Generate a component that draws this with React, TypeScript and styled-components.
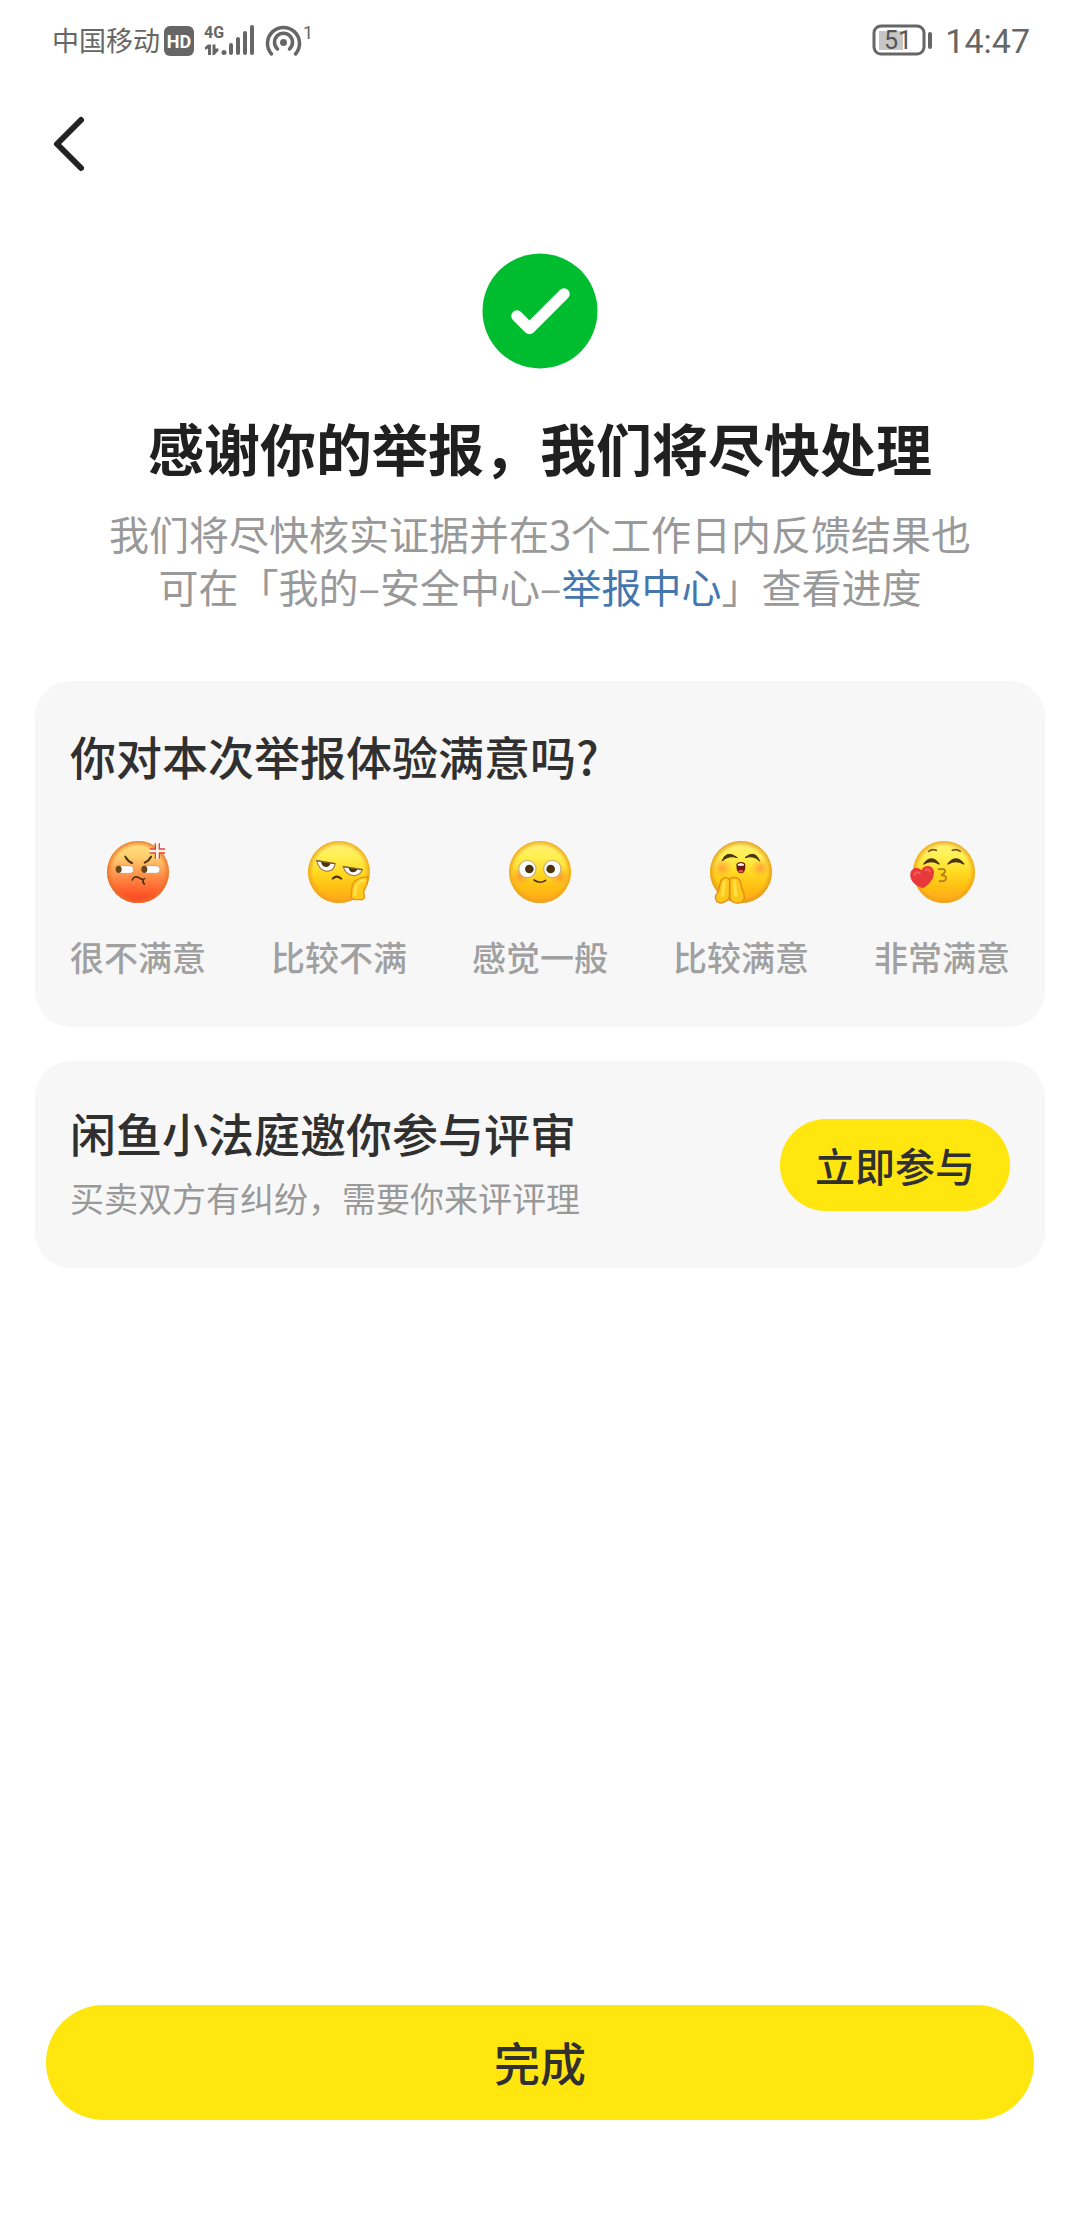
import React from "react";
import styled, { createGlobalStyle } from "styled-components";

const INK = "#303030";
const GREY = "#999999";
const YELLOW = "#ffe60f";
const STATUS = "#666666";

const GlobalStyle = createGlobalStyle`
  * { box-sizing: border-box; }
  body {
    margin: 0;
    background: #ffffff;
    font-family: "Noto Sans CJK SC", "Noto Sans", sans-serif;
  }
  button { font-family: inherit; border: 0; padding: 0; cursor: pointer; }
  svg { display: block; flex: none; overflow: visible; }
  h1, h2, p { margin: 0; }
`;

const Screen = styled.div`
  min-height: 100vh;
  display: flex;
  flex-direction: column;
`;

const StatusBar = styled.header`
  height: 80px;
  padding: 0 50px 0 52px;
  display: flex;
  align-items: center;
  justify-content: space-between;
  color: ${STATUS};
`;

const StatusGroup = styled.div<{ $gap: number }>`
  display: flex;
  align-items: center;
  gap: ${(p) => p.$gap}px;
`;

const Carrier = styled.span`
  font-size: 27px;
  line-height: 40px;
  font-weight: 400;
`;

const Clock = styled.time`
  padding-top: 2px;
  font: 400 34px/40px Roboto, sans-serif;
`;

const Nav = styled.nav`
  height: 128px;
  padding: 0 33px;
  display: flex;
  align-items: center;
`;

const BackButton = styled.button`
  width: 72px;
  height: 72px;
  display: grid;
  place-items: center;
  background: none;
`;

const Content = styled.main`
  flex: 1;
  padding: 45px 35px 0;
  display: flex;
  flex-direction: column;
`;

const Result = styled.section`
  display: flex;
  flex-direction: column;
  align-items: center;
  text-align: center;
`;

const ResultTitle = styled.h1`
  margin-top: 44px;
  font-size: 56px;
  line-height: 68px;
  font-weight: 700;
  color: #202020;
`;

const ResultText = styled.p`
  margin-top: 26px;
  font-size: 40px;
  line-height: 53px;
  color: ${GREY};
`;

const InlineLink = styled.a`
  color: #4577ad;
  text-decoration: none;
`;

const Cards = styled.div`
  margin-top: 68px;
  display: flex;
  flex-direction: column;
  gap: 34px;
`;

const Card = styled.section`
  padding: 44px 35px 48px;
  border-radius: 36px;
  background: #f7f7f7;
`;

const InviteCard = styled(Card)`
  padding: 41px 35px;
  display: flex;
  align-items: center;
  justify-content: space-between;
`;

const InviteBody = styled.div`
  padding-bottom: 5px;
`;

const CardTitle = styled.h2`
  font-size: 46px;
  line-height: 60px;
  font-weight: 500;
  color: ${INK};
`;

const CardText = styled.p`
  margin-top: 12px;
  font-size: 34px;
  line-height: 48px;
  color: ${GREY};
`;

const Ratings = styled.div`
  margin-top: 51px;
  display: flex;
  justify-content: space-between;
`;

const Rating = styled.button`
  display: flex;
  flex-direction: column;
  align-items: center;
  gap: 27px;
  background: none;
  font-size: 34px;
  font-weight: 500;
  line-height: 44px;
  color: #a0a0a0;
`;

const JoinButton = styled.button`
  height: 92px;
  padding: 0 35px;
  border-radius: 46px;
  background: ${YELLOW};
  font-size: 40px;
  font-weight: 500;
  color: ${INK};
`;

const Footer = styled.footer`
  padding: 0 46px 120px;
`;

const DoneButton = styled.button`
  width: 100%;
  height: 115px;
  padding-bottom: 4px;
  border-radius: 58px;
  background: ${YELLOW};
  font-size: 46px;
  font-weight: 500;
  color: ${INK};
`;

const SignalIcons = () => (
  <svg width="154" height="40" viewBox="164 20 154 40" fill={STATUS} aria-hidden="true">
    <rect x="164" y="26" width="30" height="30" rx="6" />
    <text x="179" y="48" fontSize="18" fontWeight="700" fontFamily="Roboto, sans-serif" fill="#fff" textAnchor="middle">HD</text>
    <text x="204" y="38" fontSize="16" fontWeight="700" fontFamily="'Liberation Sans Narrow', Roboto, sans-serif">4G</text>
    <path d="M205 50 V47 L208 44.500 H211 V55 H208 V48.500 Z" />
    <path d="M212.500 44.500 H215.500 V48.500 L218.500 48.500 V50.500 L214.500 55 H212.500 Z" />
    <circle cx="224" cy="52.500" r="2.500" />
    <rect x="229" y="43" width="4" height="12" rx="2" />
    <rect x="236" y="37" width="4" height="18" rx="2" />
    <rect x="243" y="31" width="4" height="24" rx="2" />
    <rect x="250" y="25" width="4" height="30" rx="2" />
    <g fill="none" stroke={STATUS} strokeWidth="3.500" strokeLinecap="round">
      <path d="M271.500 54 A16 16 0 1 1 295.500 54" />
      <path d="M277.500 49 A9 9 0 1 1 289.500 49" />
    </g>
    <circle cx="283.500" cy="42.500" r="3.500" />
    <text x="303" y="39" fontSize="18" fontFamily="Roboto, sans-serif">1</text>
  </svg>
);

const Battery = () => (
  <svg width="60" height="32" viewBox="873 24 60 32" role="img" aria-label="51%">
    <rect x="880" y="31" width="24" height="19" fill="#c6c6c6" />
    <rect x="875" y="26" width="50" height="28" rx="7" fill="none" stroke={STATUS} strokeWidth="3" />
    <rect x="929" y="32" width="4" height="17" rx="2" fill={STATUS} />
    <text x="899" y="49" fontSize="25" fontFamily="Roboto, sans-serif" fill="#555" textAnchor="middle">51</text>
  </svg>
);

const BROWN = "#4d3410";

const Face = ({ id, stops, rim, cx = 0, children }: {
  id: string; stops: string[]; rim: string; cx?: number; children: React.ReactNode;
}) => (
  <svg width="76" height="72" viewBox="-114 -108 228 216" aria-hidden="true">
    <defs>
      <linearGradient id={id} x1="0" y1="0" x2="0" y2="1">
        {stops.map((color, i) => (
          <stop key={i} offset={i / (stops.length - 1)} stopColor={color} />
        ))}
      </linearGradient>
      <radialGradient id={id + "-rim"}>
        <stop offset="0.82" stopColor={rim} stopOpacity="0" />
        <stop offset="1" stopColor={rim} stopOpacity="0.9" />
      </radialGradient>
      <radialGradient id={id + "-blush"}>
        <stop offset="0" stopColor="#ff7a3d" stopOpacity="0.65" />
        <stop offset="1" stopColor="#ff9a3d" stopOpacity="0" />
      </radialGradient>
    </defs>
    <g transform={`translate(${cx} 0)`}>
      <circle r="93" fill={`url(#${id})`} />
      <circle r="93" fill={`url(#${id}-rim)`} />
      {children}
    </g>
  </svg>
);

const GOLD = ["#fff07a", "#fff052", "#ffdb22", "#ffbe12", "#ffa51c"];

const Angry = () => (
  <Face id="angry" stops={["#ffe37a", "#ffcf70", "#ff9b4e", "#ff6a33", "#fb3d1c"]} rim="#e9722c">
    <g fill="none" stroke={BROWN} strokeWidth="6" strokeLinecap="round">
      <path d="M-38 -46 Q-30 -32 -18 -27 M39 -46 Q32 -33 20 -28" />
      <path d="M-17 24 Q-12 10 3 17 Q12 25 20 20 M16 23 Q12 30 19 36" strokeWidth="5" />
    </g>
    <rect x="-67" y="-19" width="54" height="23" rx="10" fill="#fff" stroke="#c9a184" strokeWidth="3" />
    <rect x="12" y="-19" width="54" height="23" rx="10" fill="#fff" stroke="#c9a184" strokeWidth="3" />
    <ellipse cx="-58" cy="-8" rx="9" ry="11" fill="#6c4516" />
    <ellipse cx="19" cy="-8" rx="9" ry="11" fill="#6c4516" />
    <g transform="translate(58 -63)">
      <path d="M-5 -23 H5 V-5 H23 V5 H5 V23 H-5 V5 H-23 V-5 H-5 Z" fill="#fff3e8" />
      <path d="M-23 -6 H-6 V-23 M6 -23 V-6 H23 M23 6 H6 V23 M-6 23 V6 H-23" fill="none" stroke="#e0483a" strokeWidth="4" />
    </g>
  </Face>
);

const Bored = () => (
  <Face id="bored" stops={GOLD} rim="#eda31c">
    <g stroke="#a68a52" strokeWidth="4" strokeLinejoin="round">
      <path d="M-67 -34 L-12 -25 Q-14 -3 -36 -2 Q-60 -4 -67 -34 Z" fill="#fff" />
      <path d="M13 -16 L70 -7 Q62 11 43 11 Q19 8 13 -16 Z" fill="#fff" />
    </g>
    <path d="M-54 -31 L-25 -26 Q-29 -14 -40 -15 Q-52 -18 -54 -31 Z M29 -13 L55 -9 Q52 1 42 1 Q30 -1 29 -13 Z" fill={BROWN} />
    <path d="M-67 -34 L-12 -25 M13 -16 L70 -7" stroke="#7b5d28" strokeWidth="4" strokeLinecap="round" />
    <path d="M-19 20 Q-7 8 7 20" fill="none" stroke={BROWN} strokeWidth="6" strokeLinecap="round" />
    <path d="M86 15 C62 14 42 26 39 45 Q37 60 36 74 Q38 84 53 83 L70 83 Q80 79 75 67 Q72 61 78 50 Q88 30 86 15 Z" fill="#ffc91d" stroke="#e59415" strokeWidth="4" />
    <path d="M76 24 Q56 28 50 48 L47 68" fill="none" stroke="#ffe04a" strokeWidth="9" strokeLinecap="round" />
  </Face>
);

const Neutral = () => (
  <Face id="neutral" stops={GOLD} rim="#eda31c">
    <circle cx="-60" cy="14" r="30" fill="url(#neutral-blush)" />
    <circle cx="60" cy="14" r="30" fill="url(#neutral-blush)" />
    <circle cx="-38" cy="-9" r="26" fill="#fff" stroke="#cdb374" strokeWidth="4" />
    <circle cx="37" cy="-9" r="26" fill="#fff" stroke="#cdb374" strokeWidth="4" />
    <circle cx="-32" cy="-9" r="13" fill={BROWN} />
    <circle cx="32" cy="-9" r="13" fill={BROWN} />
    <path d="M-18 24 Q0 37 17 25" fill="none" stroke={BROWN} strokeWidth="5" strokeLinecap="round" />
  </Face>
);

const Pleased = () => (
  <Face id="pleased" stops={GOLD} rim="#e59a1c">
    <circle cx="-56" cy="-12" r="30" fill="url(#pleased-blush)" />
    <circle cx="58" cy="-12" r="30" fill="url(#pleased-blush)" />
    <path d="M-57 -33 Q-44 -68 -11 -43 Q-36 -52 -57 -33 Z M12 -43 Q42 -68 56 -33 Q38 -52 12 -43 Z" fill={BROWN} stroke={BROWN} strokeWidth="3" strokeLinejoin="round" />
    <path d="M-14 -22 Q-12 -30 0 -30 Q12 -30 13 -22 Q14 4 0 4 Q-14 4 -14 -22 Z" fill="#6d1d10" />
    <path d="M-10 -23 Q0 -30 9 -23 L8 -19 H-9 Z" fill="#fff" />
    <path d="M-9 -2 Q0 -12 8 -2 Q0 6 -9 -2 Z" fill="#f0554d" />
    <g fill="#ffc61c" stroke="#dd9013" strokeWidth="4">
      <path d="M-34 26 Q-36 16 -20 16 Q-4 17 -1 34 Q1 50 9 66 Q14 92 -8 93 Q-28 95 -33 76 Z" />
      <path d="M-34 26 Q-36 16 -48 17 Q-61 20 -63 36 L-68 60 Q-80 70 -75 84 Q-68 97 -52 91 Q-36 86 -35 72 Z" />
    </g>
    <path d="M-20 29 L-15 70 M-49 30 L-56 70" stroke="#ffe044" strokeWidth="10" strokeLinecap="round" />
  </Face>
);

const Loving = () => (
  <Face id="loving" stops={GOLD} rim="#eda31c" cx={6}>
    <path d="M-46 -62 Q-36 -71 -23 -65 M25 -65 Q38 -71 49 -62" fill="none" stroke="#7a561a" strokeWidth="5" strokeLinecap="round" />
    <path d="M-60 -24 Q-38 -54 -15 -24 Q-38 -39 -60 -24 Z M12 -24 Q36 -54 59 -24 Q36 -39 12 -24 Z" fill={BROWN} stroke={BROWN} strokeWidth="4" strokeLinejoin="round" />
    <path d="M-16 -8 Q5 -12 3 -1 Q0 8 -9 9 Q8 11 6 20 Q3 30 -13 27" fill="none" stroke="#b9821c" strokeWidth="6" strokeLinecap="round" />
    <path d="M-62 48 C-84 45 -104 25 -101 5 C-98 -14 -78 -17 -68 -5 C-61 -22 -36 -22 -31 -5 C-26 15 -42 38 -62 48 Z" fill="#e8383c" />
    <path d="M-89 8 Q-84 -3 -73 4 M-56 -5 Q-48 -12 -42 -3" fill="none" stroke="#f25c56" strokeWidth="7" strokeLinecap="round" />
  </Face>
);

const ratings = [
  { label: "很不满意", Icon: Angry },
  { label: "比较不满", Icon: Bored },
  { label: "感觉一般", Icon: Neutral },
  { label: "比较满意", Icon: Pleased },
  { label: "非常满意", Icon: Loving },
];

export default function App() {
  return (
    <Screen>
      <GlobalStyle />
      <StatusBar>
        <StatusGroup $gap={4}>
          <Carrier>中国移动</Carrier>
          <SignalIcons />
        </StatusGroup>
        <StatusGroup $gap={13}>
          <Battery />
          <Clock>14:47</Clock>
        </StatusGroup>
      </StatusBar>
      <Nav>
        <BackButton aria-label="返回">
          <svg width="30" height="54" viewBox="0 0 30 54" fill="none" stroke="#222" strokeWidth="6" strokeLinecap="round" strokeLinejoin="round">
            <path d="M27 3 L3 27 L27 51" />
          </svg>
        </BackButton>
      </Nav>
      <Content>
        <Result>
          <svg width="116" height="116" viewBox="0 0 116 116" aria-hidden="true">
            <circle cx="58" cy="58" r="57.500" fill="#00bc2f" />
            <path d="M35 63 L47.500 75.500 L82 41" fill="none" stroke="#fff" strokeWidth="11.500" strokeLinecap="round" strokeLinejoin="round" />
          </svg>
          <ResultTitle>感谢你的举报，我们将尽快处理</ResultTitle>
          <ResultText>
            我们将尽快核实证据并在3个工作日内反馈结果也
            <br />
            可在「我的–安全中心–<InlineLink href="#reports">举报中心</InlineLink>」查看进度
          </ResultText>
        </Result>
        <Cards>
          <Card>
            <CardTitle>你对本次举报体验满意吗?</CardTitle>
            <Ratings>
              {ratings.map(({ label, Icon }) => (
                <Rating key={label}>
                  <Icon />
                  {label}
                </Rating>
              ))}
            </Ratings>
          </Card>
          <InviteCard>
            <InviteBody>
              <CardTitle>闲鱼小法庭邀你参与评审</CardTitle>
              <CardText>买卖双方有纠纷，需要你来评评理</CardText>
            </InviteBody>
            <JoinButton>立即参与</JoinButton>
          </InviteCard>
        </Cards>
      </Content>
      <Footer>
        <DoneButton>完成</DoneButton>
      </Footer>
    </Screen>
  );
}
